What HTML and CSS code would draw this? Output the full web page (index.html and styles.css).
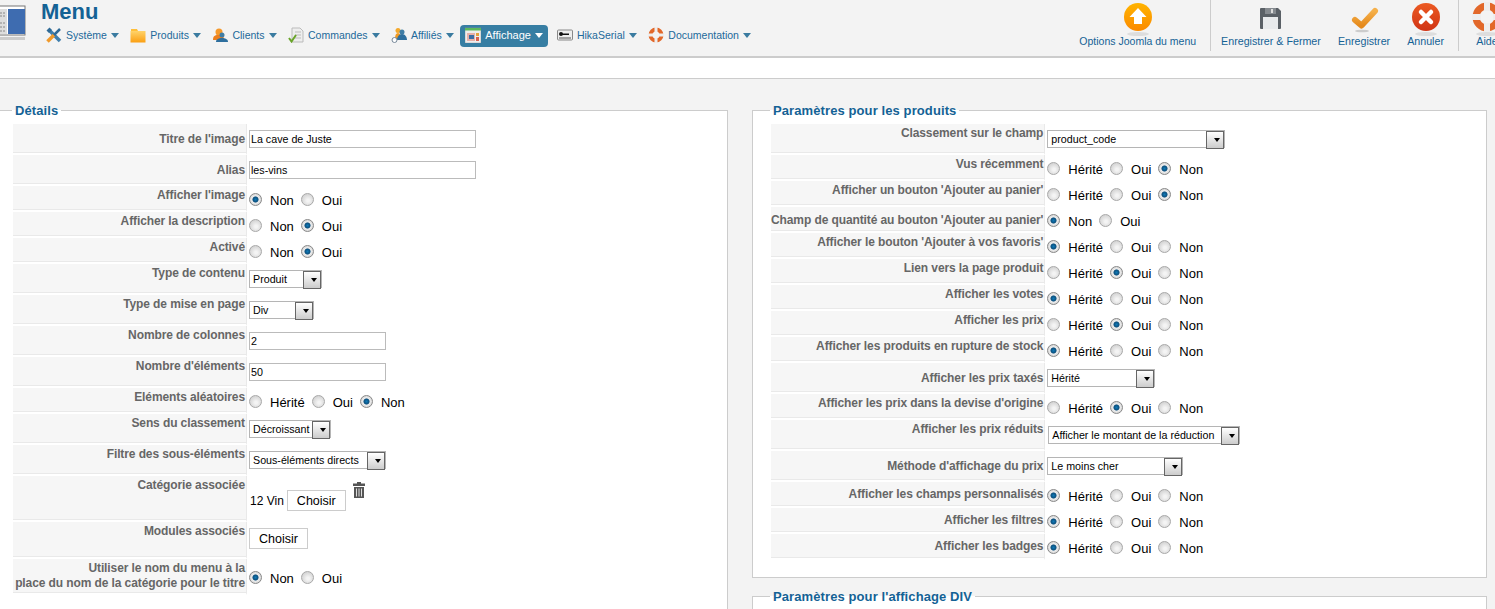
FILE: index.html
```html
<!DOCTYPE html>
<html lang="fr">
<head>
<meta charset="utf-8">
<title>Menu</title>
<link rel="stylesheet" href="styles.css">
</head>
<body>
<header class="top">
  <div class="logo"><svg width="26" height="44" viewBox="0 0 26 44"><rect x="-12" y="6" width="37" height="29" fill="#fff" stroke="#777"/><rect x="8" y="9" width="17" height="25" fill="#3e6cb0"/><rect x="-10" y="9" width="17" height="25" fill="#ddd"/><path d="M0 13h6M0 16h6M0 23h6M0 27h6M0 31h6" stroke="#888" stroke-dasharray="2 1"/><rect x="0" y="37" width="25" height="3" fill="#ccc"/></svg></div>
  <div class="titles">
    <h1>Menu</h1>
    <nav class="menu">
      <a class="mi"><svg width="16" height="16" viewBox="0 0 16 16"><path d="M3 3 14 14" stroke="#3f7fae" stroke-width="3.500"/><path d="M0.500 3.500 3.500 0.500 6 3 3 6z" fill="#2f6a96"/><path d="M1.500 14.500 8 8" stroke="#f09a2c" stroke-width="3.500"/><path d="M8 8 14 2" stroke="#2f6a96" stroke-width="2.500"/></svg>Système<i></i></a>
      <a class="mi"><svg width="16" height="16" viewBox="0 0 16 16"><defs><linearGradient id="fo" x1="0" y1="0" x2="0" y2="1"><stop offset="0" stop-color="#ffd36a"/><stop offset="1" stop-color="#fb9f12"/></linearGradient></defs><path d="M1 2h6l1 2h7v2H1z" fill="#ffbf3a"/><rect x="0.500" y="4" width="15" height="11.500" fill="url(#fo)"/></svg>Produits<i></i></a>
      <a class="mi"><svg width="16" height="16" viewBox="0 0 16 16"><circle cx="7" cy="5" r="3.500" fill="#f5992c"/><path d="M1 13c0-5 3-5 6-5 3 0 5 1 5 5z" fill="#ec7f1e"/><circle cx="10" cy="8" r="2.500" fill="#3f7da5"/><path d="M4 15c0-3 3-4 6-4s6 1 6 4z" fill="#2e6f9e"/></svg>Clients<i></i></a>
      <a class="mi"><svg width="16" height="16" viewBox="0 0 16 16"><path d="M4 1h8l3 3v11H4z" fill="#eee" stroke="#bbb"/><path d="M7 5h6M7 8h6M7 11h6" stroke="#bbb"/><path d="M1 11l2.500 3.500L8 8" fill="none" stroke="#6aa52a" stroke-width="2"/></svg>Commandes<i></i></a>
      <a class="mi"><svg width="16" height="16" viewBox="0 0 16 16"><circle cx="7" cy="3.500" r="2.500" fill="#f4a92c"/><path d="M4 12c0-4 1-6 3-6s3 2 3 6z" fill="#f29a22"/><circle cx="11" cy="5" r="2.500" fill="#3f7da5"/><path d="M6 13c0-3 2-6 5-6s5 3 5 6z" fill="#2e6f9e"/><circle cx="3.500" cy="13" r="2.500" fill="#fff" stroke="#789"/></svg>Affiliés<i></i></a>
      <a class="mi active"><svg width="16" height="16" viewBox="0 0 16 16"><rect x="0" y="1" width="16" height="15" fill="#eee" stroke="#999" stroke-width=".5"/><rect x="0" y="1" width="16" height="2.500" fill="#5cb85c"/><rect x="2" y="6" width="8" height="8" fill="#e8b0a8"/><rect x="4" y="8" width="5" height="4" fill="#3b6ea5"/><rect x="11" y="6" width="3" height="3" fill="#e4a23c"/><rect x="11" y="10" width="3" height="4" fill="#d86050"/></svg>Affichage<i></i></a>
      <a class="mi"><svg width="16" height="16" viewBox="0 0 16 16"><rect x="0.500" y="3" width="15" height="10" rx="1" fill="#eee" stroke="#888"/><circle cx="4" cy="7" r="2" fill="#111"/><path d="M4 6.500h8v1.500H4z" fill="#111"/><path d="M2 11h12" stroke="#555"/></svg>HikaSerial<i></i></a>
      <a class="mi"><svg width="16" height="16" viewBox="0 0 16 16"><circle cx="8" cy="8" r="5.500" fill="none" stroke="#e2682a" stroke-width="4"/><path d="M8 0v5M8 11v5M0 8h5M11 8h5" stroke="#eee" stroke-width="3"/></svg>Documentation<i></i></a>
    </nav>
  </div>
  <div class="toolbar">
    <div class="tgroup first">
      <a class="tb"><svg width="32" height="36" viewBox="0 0 32 36"><defs><linearGradient id="or" x1="0" y1="0" x2="0" y2="1"><stop offset="0" stop-color="#ffb400"/><stop offset="1" stop-color="#fb8a00"/></linearGradient></defs><ellipse cx="16" cy="32" rx="11" ry="2" fill="#ddd"/><circle cx="16" cy="15" r="14" fill="url(#or)"/><path d="M16 6l8.500 9H20v7h-8v-7H7.500z" fill="#fff"/></svg><span>Options Joomla du menu</span></a>
    </div>
    <div class="tgroup">
      <a class="tb"><svg width="32" height="36" viewBox="0 0 32 36"><path d="M5 7a1 1 0 0 1 1-1h17l3 3v17a1 1 0 0 1-1 1H6a1 1 0 0 1-1-1z" fill="#5a6066"/><rect x="10" y="6" width="11" height="6" fill="#858a8f"/><rect x="16" y="7" width="2" height="4" fill="#ddd"/><rect x="8" y="15" width="15" height="12" fill="#e8eaec"/></svg><span>Enregistrer &amp; Fermer</span></a>
      <a class="tb"><svg width="32" height="36" viewBox="0 0 32 36"><defs><linearGradient id="ck" x1="0" y1="0" x2="0" y2="1"><stop offset="0" stop-color="#f5b04a"/><stop offset="1" stop-color="#e58a1c"/></linearGradient></defs><ellipse cx="14" cy="29" rx="7" ry="1.300" fill="#ccc"/><path d="M7 18l6.500 5.500L27 9" fill="none" stroke="url(#ck)" stroke-width="6" stroke-linecap="round" stroke-linejoin="round"/></svg><span>Enregistrer</span></a>
      <a class="tb"><svg width="32" height="36" viewBox="0 0 32 36"><defs><linearGradient id="rd" x1="0" y1="0" x2="0" y2="1"><stop offset="0" stop-color="#ec5a22"/><stop offset="1" stop-color="#d03415"/></linearGradient></defs><ellipse cx="16" cy="32" rx="11" ry="2" fill="#ddd"/><circle cx="16" cy="15" r="14" fill="url(#rd)"/><path d="M11 10l10 10M21 10 11 20" stroke="#fff" stroke-width="4.500" stroke-linecap="round"/></svg><span>Annuler</span></a>
    </div>
    <div class="tgroup">
      <a class="tb"><svg width="32" height="36" viewBox="0 0 32 36"><ellipse cx="16" cy="32" rx="11" ry="2" fill="#ddd"/><circle cx="16" cy="15" r="11" fill="none" stroke="#e2682a" stroke-width="7"/><path d="M16 0v9M16 21v9M1 15h9M22 15h9" stroke="#eee" stroke-width="6"/></svg><span>Aide</span></a>
    </div>
  </div>
</header>
<div class="subbar"></div>
<main class="columns">
  <fieldset class="box left">
    <legend>Détails</legend>
    <table class="form">
      <tr class="h31 mid"><td class="key">Titre de l'image</td><td class="val"><input class="text w227" value="La cave de Juste"></td></tr>
      <tr class="h31 mid"><td class="key">Alias</td><td class="val"><input class="text w227" value="les-vins"></td></tr>
      <tr class="h26"><td class="key">Afficher l'image</td><td class="val"><label><input type="radio" name="a" checked>Non</label><label><input type="radio" name="a">Oui</label></td></tr>
      <tr class="h26"><td class="key">Afficher la description</td><td class="val"><label><input type="radio" name="b">Non</label><label><input type="radio" name="b" checked>Oui</label></td></tr>
      <tr class="h26"><td class="key">Activé</td><td class="val"><label><input type="radio" name="c">Non</label><label><input type="radio" name="c" checked>Oui</label></td></tr>
      <tr class="h31"><td class="key">Type de contenu</td><td class="val"><span class="sel w73"><select><option>Produit</option></select></span></td></tr>
      <tr class="h31"><td class="key">Type de mise en page</td><td class="val"><span class="sel w65"><select><option>Div</option></select></span></td></tr>
      <tr class="h31"><td class="key">Nombre de colonnes</td><td class="val"><input class="text w137" value="2"></td></tr>
      <tr class="h31"><td class="key">Nombre d'éléments</td><td class="val"><input class="text w137" value="50"></td></tr>
      <tr class="h26"><td class="key">Eléments aléatoires</td><td class="val"><label><input type="radio" name="d">Hérité</label><label><input type="radio" name="d">Oui</label><label><input type="radio" name="d" checked>Non</label></td></tr>
      <tr class="h31"><td class="key">Sens du classement</td><td class="val"><span class="sel w82"><select><option>Décroissant</option></select></span></td></tr>
      <tr class="h31"><td class="key">Filtre des sous-éléments</td><td class="val"><span class="sel w137"><select><option>Sous-éléments directs</option></select></span></td></tr>
      <tr class="h46"><td class="key">Catégorie associée</td><td class="val cat"><span class="catname">12 Vin</span><button class="choose">Choisir</button><svg class="trash" width="12" height="16" viewBox="0 0 12 16"><path d="M4 0h4v1.500h4V4H0V1.500h4z" fill="#555"/><path d="M1 5h10v11H1z" fill="#555"/><path d="M3.500 6.500v8M6 6.500v8M8.500 6.500v8" stroke="#ddd"/></svg></td></tr>
      <tr class="h37"><td class="key">Modules associés</td><td class="val"><button class="choose">Choisir</button></td></tr>
      <tr class="h36 vm"><td class="key">Utiliser le nom du menu à la<br>place du nom de la catégorie pour le titre</td><td class="val"><label><input type="radio" name="e" checked>Non</label><label><input type="radio" name="e">Oui</label></td></tr>
    </table>
  </fieldset>
  <div class="rightcol">
    <fieldset class="box">
      <legend>Paramètres pour les produits</legend>
      <table class="form wide">
        <tr class="h31"><td class="key">Classement sur le champ</td><td class="val"><span class="sel w178"><select><option>product_code</option></select></span></td></tr>
        <tr class="h26"><td class="key">Vus récemment</td><td class="val"><label><input type="radio" name="f">Hérité</label><label><input type="radio" name="f">Oui</label><label><input type="radio" name="f" checked>Non</label></td></tr>
        <tr class="h26"><td class="key">Afficher un bouton 'Ajouter au panier'</td><td class="val"><label><input type="radio" name="g">Hérité</label><label><input type="radio" name="g">Oui</label><label><input type="radio" name="g" checked>Non</label></td></tr>
        <tr class="h26 mid"><td class="key">Champ de quantité au bouton 'Ajouter au panier'</td><td class="val"><label><input type="radio" name="h" checked>Non</label><label><input type="radio" name="h">Oui</label></td></tr>
        <tr class="h26"><td class="key">Afficher le bouton 'Ajouter à vos favoris'</td><td class="val"><label><input type="radio" name="i" checked>Hérité</label><label><input type="radio" name="i">Oui</label><label><input type="radio" name="i">Non</label></td></tr>
        <tr class="h26"><td class="key">Lien vers la page produit</td><td class="val"><label><input type="radio" name="j">Hérité</label><label><input type="radio" name="j" checked>Oui</label><label><input type="radio" name="j">Non</label></td></tr>
        <tr class="h26"><td class="key">Afficher les votes</td><td class="val"><label><input type="radio" name="k" checked>Hérité</label><label><input type="radio" name="k">Oui</label><label><input type="radio" name="k">Non</label></td></tr>
        <tr class="h26"><td class="key">Afficher les prix</td><td class="val"><label><input type="radio" name="l">Hérité</label><label><input type="radio" name="l" checked>Oui</label><label><input type="radio" name="l">Non</label></td></tr>
        <tr class="h26"><td class="key">Afficher les produits en rupture de stock</td><td class="val"><label><input type="radio" name="m" checked>Hérité</label><label><input type="radio" name="m">Oui</label><label><input type="radio" name="m">Non</label></td></tr>
        <tr class="h31 mid"><td class="key">Afficher les prix taxés</td><td class="val"><span class="sel w108"><select><option>Hérité</option></select></span></td></tr>
        <tr class="h26"><td class="key">Afficher les prix dans la devise d'origine</td><td class="val"><label><input type="radio" name="n">Hérité</label><label><input type="radio" name="n" checked>Oui</label><label><input type="radio" name="n">Non</label></td></tr>
        <tr class="h31"><td class="key">Afficher les prix réduits</td><td class="val"><span class="sel w192 off"><select><option>Afficher le montant de la réduction</option></select></span></td></tr>
        <tr class="h31 mid"><td class="key">Méthode d'affichage du prix</td><td class="val"><span class="sel w136"><select><option>Le moins cher</option></select></span></td></tr>
        <tr class="h26 low"><td class="key">Afficher les champs personnalisés</td><td class="val"><label><input type="radio" name="o" checked>Hérité</label><label><input type="radio" name="o">Oui</label><label><input type="radio" name="o">Non</label></td></tr>
        <tr class="h26 low"><td class="key">Afficher les filtres</td><td class="val"><label><input type="radio" name="p" checked>Hérité</label><label><input type="radio" name="p">Oui</label><label><input type="radio" name="p">Non</label></td></tr>
        <tr class="h26 low"><td class="key">Afficher les badges</td><td class="val"><label><input type="radio" name="q" checked>Hérité</label><label><input type="radio" name="q">Oui</label><label><input type="radio" name="q">Non</label></td></tr>
      </table>
    </fieldset>
    <fieldset class="box second">
      <legend>Paramètres pour l'affichage DIV</legend>
    </fieldset>
  </div>
</main>
</body>
</html>
```
FILE: styles.css
```css
* { box-sizing: border-box; }
html, body { margin: 0; height: 609px; overflow: hidden; }
body { background: #f3f3f3; font-family: "Liberation Sans", Arial, sans-serif; font-size: 12px; color: #000; width: 1495px; }
.top { display: flex; height: 58px; border-bottom: 2px solid #ccc; background: #f3f3f3; }
.logo { width: 26px; height: 44px; flex: none; }
.titles { margin-left: 15px; flex: none; }
h1 { margin: 0; font-size: 22px; line-height: 24px; font-weight: bold; color: #146295; }
.menu { display: flex; margin: 1px 0 0 5px; height: 22px; align-items: center; }
.mi { display: flex; align-items: center; height: 22px; padding-bottom: 2px; margin-right: 11.500px; font-size: 10.500px; color: #21699a; white-space: nowrap; }
.mi svg { margin-right: 4px; flex: none; }
.mi i { width: 0; height: 0; margin-left: 4px; border-left: 4px solid transparent; border-right: 4px solid transparent; border-top: 5px solid #3a7ba0; }
.mi.active { background: #377ea3; color: #fff; font-size: 11px; border-radius: 4px; padding: 0 5px 2px; margin-left: -5px; margin-right: 9px; }
.mi.active i { border-top-color: #fff; }
.toolbar { display: flex; margin-left: auto; margin-right: -14px; height: 51px; flex: none; }
.tgroup { display: flex; border-left: 1px solid #ccc; padding: 0 14px 0 10px; gap: 17px; }
.tgroup:last-child { padding: 0 6px 0 12px; }
.tgroup.first { border-left: 0; padding-right: 14px; }
.tb { display: flex; flex-direction: column; align-items: center; font-size: 10.700px; color: #146295; white-space: nowrap; padding-top: 2px; }
.first .tb { font-size: 10.500px; }
.tb svg { flex: none; }
.tb span { line-height: 12px; margin-top: -3px; }
.subbar { height: 21px; background: #fff; border-bottom: 1px solid #ccc; }
.columns { display: flex; align-items: flex-start; padding-top: 22px; margin-left: -8px; }
.box { margin: 0; padding: 5px 8px 8px 20px; min-width: 0; border: 1px solid #ccc; background: #fff; }
.box legend { padding: 2px 3px 0; margin-left: -1px; font-size: 13px; line-height: 16px; letter-spacing: 0.1px; font-weight: bold; color: #146295; }
.left { width: 736px; height: 508px; border-bottom: 0; flex: none; }
.rightcol { width: 735px; margin-left: 24px; flex: none; }
.rightcol .box { height: 477px; padding-left: 18px; }
.rightcol .box.second { margin-top: 9px; height: 22px; padding: 0 8px 0 18px; border-bottom: 0; }
.form { border-collapse: separate; border-spacing: 0; }
.form td { padding: 0; border-bottom: 2px solid #fff; vertical-align: top; }
.form .key { width: 234px; background: #f6f6f6; border-right: 1px solid #e9e9e9; box-shadow: inset 0 -1px 0 #e9e9e9; text-align: right; font-weight: bold; font-size: 12px; line-height: 15px; letter-spacing: -0.1px; color: #666; padding: 2px 1px 0 0; white-space: nowrap; }
.form.wide .key { width: 274px; }
.form .val { padding-left: 1px; font-size: 13px; white-space: nowrap; }
.h26 td { height: 26px; }
.h31 td { height: 31px; }
.h36 td { height: 36px; }
.h37 td { height: 37px; }
.h46 td { height: 46px; }
.form .mid .key { vertical-align: middle; padding-top: 2px; }
.form .low .key { padding-top: 5px; }
.form .vm .val { vertical-align: middle; }
.text { display: block; height: 18px; margin: 6px 0 0 1px; padding: 0 1px; border: 1px solid #bbb; background: #fff; font: 10.700px "Liberation Sans", Arial, sans-serif; color: #000; }
.w227 { width: 227px; }
.w137 { width: 137px; }
.val label { display: inline-flex; align-items: center; height: 24px; padding-top: 4px; margin-right: 6px; }
.val input[type=radio] { appearance: none; -webkit-appearance: none; width: 13px; height: 13px; margin: 0 8px 2px 1px; border-radius: 50%; border: 1px solid #a8a8a8; background: radial-gradient(circle at 55% 60%, #f4f4f4 15%, #cdcdcd 85%); flex: none; }
.val input[type=radio]:checked { background: radial-gradient(circle, #0f7ab8 0, #0d4f7c 34%, #eeeeee 44%, #c4c4c4 100%); border-color: #888; }
.sel { position: relative; display: block; height: 18px; margin: 6px 0 0 1px; }
.sel.off { margin-left: 2px; }
.sel select { appearance: none; -webkit-appearance: none; display: block; width: 100%; height: 18px; margin: 0; padding: 0 18px 0 3px; border: 1px solid #b5b5b5; border-radius: 0; background: #fff; font: 10.700px "Liberation Sans", Arial, sans-serif; color: #000; }
.sel::after { content: ""; position: absolute; right: 1px; top: 1px; width: 16px; height: 16px; border: 1px solid #666; background: linear-gradient(#fff, #ccc); }
.sel::before { content: ""; position: absolute; z-index: 1; right: 5px; top: 8px; width: 0; height: 0; border-left: 3.500px solid transparent; border-right: 3.500px solid transparent; border-top: 4px solid #000; }
.w73 { width: 73px; }
.w65 { width: 65px; }
.w82 { width: 82px; }
.w178 { width: 178px; }
.w108 { width: 108px; }
.w192 { width: 192px; }
.w136 { width: 136px; }
.choose { width: 59px; height: 21px; padding: 0; margin: 6px 0 0 1px; border: 1px solid #ccc; background: #fff; font: 12.500px "Liberation Sans", Arial, sans-serif; color: #000; }
.catname { margin-left: 2px; font-size: 12px; }
.cat .choose { margin: 14px 0 0 3px; }
.trash { margin: 6px 0 0 7px; vertical-align: top; }
```
